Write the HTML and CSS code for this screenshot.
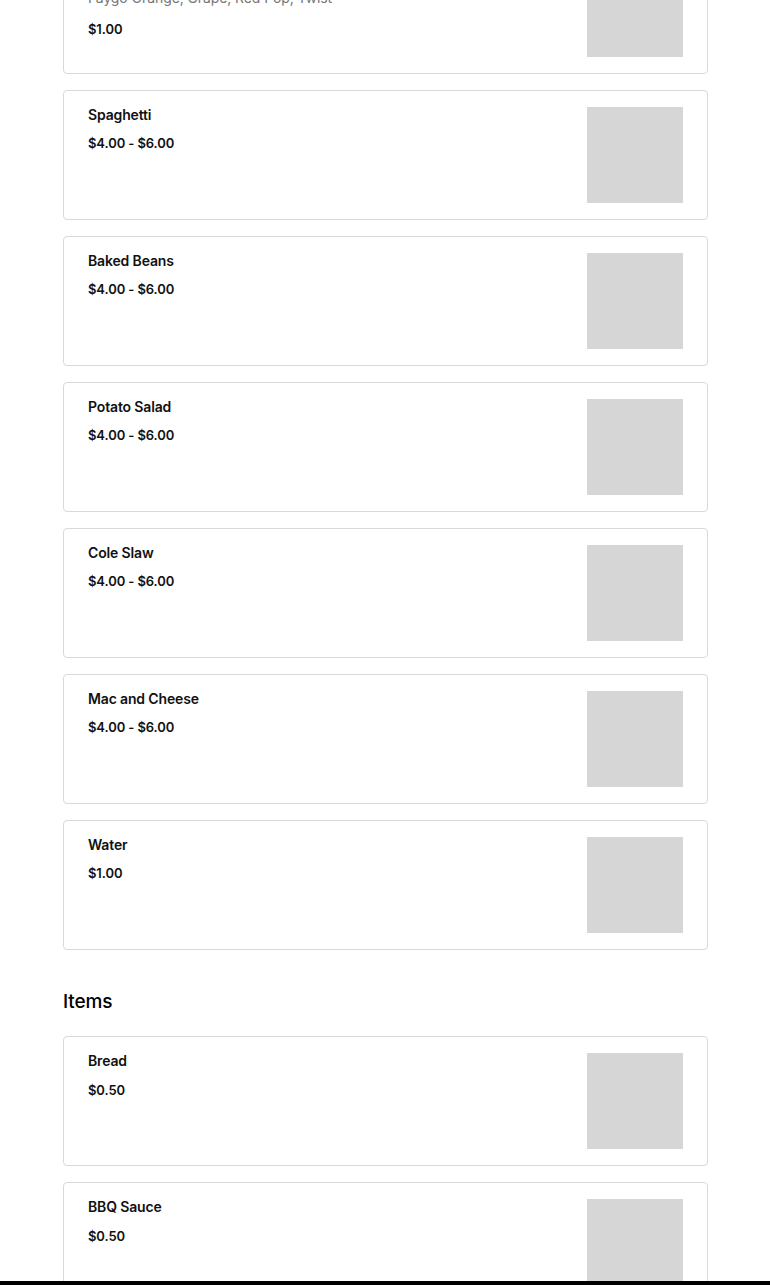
FILE: index.html
```html
<!DOCTYPE html>
<html lang="en">
<head>
<meta charset="utf-8">
<title>Menu</title>
<link rel="stylesheet" href="styles.css">
</head>
<body>
<main class="menu">
  <section class="section">
    <div class="card">
      <div class="info">
        <div class="name">Pop</div>
        <div class="desc">Faygo Orange, Grape, Red Pop, Twist</div>
        <div class="price">$1.00</div>
      </div>
      <div class="thumb"></div>
    </div>
    <div class="card">
      <div class="info">
        <div class="name">Spaghetti</div>
        <div class="price">$4.00 - $6.00</div>
      </div>
      <div class="thumb"></div>
    </div>
    <div class="card">
      <div class="info">
        <div class="name">Baked Beans</div>
        <div class="price">$4.00 - $6.00</div>
      </div>
      <div class="thumb"></div>
    </div>
    <div class="card">
      <div class="info">
        <div class="name">Potato Salad</div>
        <div class="price">$4.00 - $6.00</div>
      </div>
      <div class="thumb"></div>
    </div>
    <div class="card">
      <div class="info">
        <div class="name">Cole Slaw</div>
        <div class="price">$4.00 - $6.00</div>
      </div>
      <div class="thumb"></div>
    </div>
    <div class="card">
      <div class="info">
        <div class="name">Mac and Cheese</div>
        <div class="price">$4.00 - $6.00</div>
      </div>
      <div class="thumb"></div>
    </div>
    <div class="card">
      <div class="info">
        <div class="name">Water</div>
        <div class="price">$1.00</div>
      </div>
      <div class="thumb"></div>
    </div>
  </section>
  <h2 class="section-title">Items</h2>
  <section class="section">
    <div class="card">
      <div class="info">
        <div class="name">Bread</div>
        <div class="price price-gap">$0.50</div>
      </div>
      <div class="thumb"></div>
    </div>
    <div class="card">
      <div class="info">
        <div class="name">BBQ Sauce</div>
        <div class="price price-gap">$0.50</div>
      </div>
      <div class="thumb"></div>
    </div>
  </section>
</main>
<div class="bottom-bar"></div>
</body>
</html>
```
FILE: styles.css
```css
html, body {
  margin: 0;
  padding: 0;
  background: #fff;
  overflow: hidden;
}
body {
  font-family: Inter, "Noto Sans", "Liberation Sans", sans-serif;
  color: #111;
}
.menu {
  width: 645px;
  margin: -56px 0 0 63px;
}
.section {
  display: flex;
  flex-direction: column;
  gap: 16px;
}
.card {
  display: flex;
  justify-content: space-between;
  align-items: flex-start;
  border: 1px solid #d9d9d9;
  border-radius: 4px;
  padding: 16px 24px 16px 24px;
}
.info {
  display: flex;
  flex-direction: column;
}
.name {
  font-size: 14px;
  font-weight: 600;
  line-height: 16px;
  letter-spacing: -0.15px;
}
.desc {
  margin-top: 12px;
  font-size: 14px;
  line-height: 18px;
  color: #767676;
  letter-spacing: -0.1px;
}
.price {
  margin-top: 12px;
  font-size: 13px;
  font-weight: 600;
  line-height: 16px;
  letter-spacing: -0.1px;
}
.desc + .price {
  margin-top: 14px;
}
.price-gap {
  margin-top: 13px;
}
.thumb {
  width: 96px;
  height: 96px;
  background: #d6d6d6;
  flex: none;
}
.section-title {
  margin: 40px 0 22px;
  font-size: 19px;
  font-weight: 500;
  line-height: 24px;
  color: #000;
  letter-spacing: -0.1px;
}
.bottom-bar {
  position: fixed;
  left: 0;
  right: 0;
  bottom: 0;
  height: 4px;
  background: #000;
}
```
